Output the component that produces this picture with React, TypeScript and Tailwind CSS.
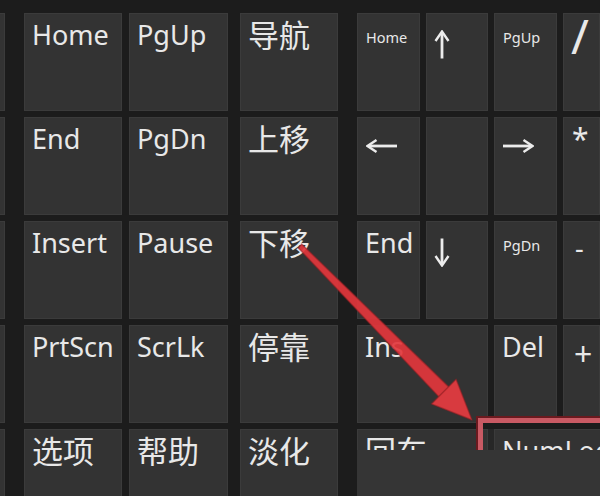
import type { JSX, ReactNode } from "react";

const KEY = "bg-[#333333] border border-[#3b3b3b] text-[#e8e8e8] shrink-0";
const LATIN = "font-['Noto_Sans',sans-serif] text-[27px] leading-none pl-[7px] pt-[7px]";
const CJK = "font-['Noto_Sans_CJK_SC','Noto_Sans',sans-serif] text-[31px] leading-none pl-[7px] pt-[4px]";
const SMALL = "font-['Noto_Sans',sans-serif] text-[14.5px] leading-none pl-[8px] pt-[16px]";

type Kind = "latin" | "cjk" | "small";

function Key({
    label,
    kind = "latin",
    className = "",
}: {
    label?: ReactNode;
    kind?: Kind;
    className?: string;
}): JSX.Element {
    const text = kind === "cjk" ? CJK : kind === "small" ? SMALL : LATIN;
    return (
        <div className={`${KEY} ${className}`}>
            {label !== undefined && <div className={text}>{label}</div>}
        </div>
    );
}

function ArrowUp({ down = false }: { down?: boolean }): JSX.Element {
    return (
        <svg width="16" height="29" viewBox="0 0 16 29" className={down ? "rotate-180" : ""}>
            <path d="M8 2.5 V28.5" stroke="#ececec" strokeWidth="2.8" fill="none" />
            <path d="M1.5 11 L8 1.5 L14.5 11" stroke="#ececec" strokeWidth="2.4" fill="none" />
        </svg>
    );
}

function ArrowSide({ left = false }: { left?: boolean }): JSX.Element {
    return (
        <svg width="31" height="14" viewBox="0 0 31 14" className={left ? "rotate-180" : ""}>
            <path d="M0 7 H28.5" stroke="#ececec" strokeWidth="2.8" fill="none" />
            <path d="M20.5 1 L29.5 7 L20.5 13" stroke="#ececec" strokeWidth="2.4" fill="none" />
        </svg>
    );
}

const NAV: { label: string; kind: Kind }[][] = [
    [
        { label: "Home", kind: "latin" },
        { label: "End", kind: "latin" },
        { label: "Insert", kind: "latin" },
        { label: "PrtScn", kind: "latin" },
        { label: "选项", kind: "cjk" },
    ],
    [
        { label: "PgUp", kind: "latin" },
        { label: "PgDn", kind: "latin" },
        { label: "Pause", kind: "latin" },
        { label: "ScrLk", kind: "latin" },
        { label: "帮助", kind: "cjk" },
    ],
    [
        { label: "导航", kind: "cjk" },
        { label: "上移", kind: "cjk" },
        { label: "下移", kind: "cjk" },
        { label: "停靠", kind: "cjk" },
        { label: "淡化", kind: "cjk" },
    ],
];

const NAV_COLS = ["ml-[19px] w-[98px]", "ml-[7px] w-[99px]", "ml-[12px] w-[98px]"];

export default function App(): JSX.Element {
    return (
        <div className="relative w-[600px] h-[496px] overflow-hidden bg-[#1c1c1c] pt-[13px] flex">
            {/* edge of the main keyboard */}
            <div className="w-[5px] flex flex-col gap-[6px] shrink-0">
                {[0, 1, 2, 3].map((i) => (
                    <Key key={i} className="h-[98px] border-l-0" />
                ))}
                <Key className="flex-1 border-l-0 border-b-0" />
            </div>

            {NAV.map((col, c) => (
                <div key={c} className={`${NAV_COLS[c]} flex flex-col gap-[6px] shrink-0`}>
                    {col.map((k, r) => (
                        <Key
                            key={k.label}
                            label={k.label}
                            kind={k.kind}
                            className={r === 4 ? "flex-1 border-b-0" : "h-[98px]"}
                        />
                    ))}
                </div>
            ))}

            {/* number pad */}
            <div className="ml-[19px] flex-1 flex flex-col gap-[6px]">
                <div className="flex gap-[6px] h-[98px]">
                    <Key label="Home" kind="small" className="w-[63px]" />
                    <Key className="w-[62px]" label={<div className="-ml-[1px]"><ArrowUp /></div>} kind="small" />
                    <Key label="PgUp" kind="small" className="w-[63px]" />
                    <Key className="w-[37px]" label={<span className="block -mt-[9px] text-[48px]">/</span>} />
                </div>
                <div className="flex gap-[6px] h-[98px]">
                    <Key className="w-[63px]" label={<div className="pt-[14px] pl-[1px]"><ArrowSide left /></div>} />
                    <Key className="w-[62px]" />
                    <Key className="w-[63px]" label={<div className="pt-[14px] pl-[1px]"><ArrowSide /></div>} />
                    <Key className="w-[37px]" label={<span className="block text-[30px] -mt-[1px] pl-[1px]">*</span>} />
                </div>
                <div className="flex gap-[6px] h-[98px]">
                    <Key label="End" className="w-[63px]" />
                    <Key className="w-[62px]" label={<div className="-ml-[1px]"><ArrowUp down /></div>} kind="small" />
                    <Key label="PgDn" kind="small" className="w-[63px]" />
                    <Key className="w-[37px]" label={<span className="block pt-[5px] pl-[4px]">-</span>} />
                </div>
                <div className="flex gap-[6px] h-[98px]">
                    <Key label="Ins" className="w-[131px]" />
                    <Key label="Del" className="w-[63px]" />
                    <Key className="w-[37px]" label={<span className="block text-[32px] pt-[5px] pl-[3px]">+</span>} />
                </div>
                <div className="flex-1 bg-[#353535]">
                    {/* only the top of the last row shows above the flat panel */}
                    <div className="flex gap-[6px] h-[21px] overflow-hidden bg-[#272727]">
                        <Key label="回车" kind="cjk" className="w-[131px] h-[98px] border-b-0" />
                        <Key label="NumLock" className="flex-1 h-[98px] border-b-0" />
                    </div>
                </div>
            </div>

            {/* red highlight box, clipped by the panel below it */}
            <div className="absolute left-[476px] top-[416px] w-[140px] h-[34px] overflow-hidden pointer-events-none">
                <div className="mt-[2px] ml-[2px] w-[200px] h-[80px] border-t-[5px] border-l-[5px] border-[#c95a64] shadow-[0_0_0_2px_#6a1a1f]" />
            </div>

            {/* red arrow */}
            <svg className="absolute left-0 top-0 pointer-events-none" width="600" height="496" viewBox="0 0 600 496">
                <polygon
                    points="298.3,247.9 301.7,244.1 448.9,387.1 439.1,396.9"
                    fill="#e2363c"
                    fillOpacity="0.92"
                    stroke="#8e1d22"
                    strokeOpacity="0.5"
                    strokeWidth="1.5"
                />
                <polygon
                    points="472,420 431.5,403.9 456.1,379.3"
                    fill="#e63b40"
                    fillOpacity="0.92"
                    stroke="#8e1d22"
                    strokeOpacity="0.5"
                    strokeWidth="1.5"
                    strokeLinejoin="round"
                />
            </svg>
        </div>
    );
}
